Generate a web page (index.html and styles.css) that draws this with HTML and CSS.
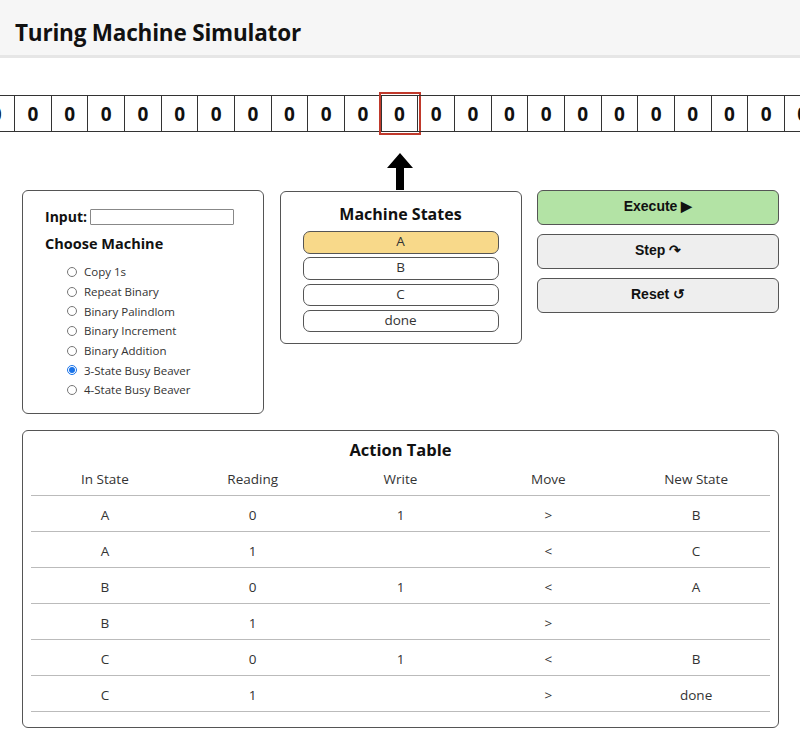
FILE: index.html
```html
<!DOCTYPE html>
<html>
<head>
<meta charset="utf-8">
<title>Turing Machine Simulator</title>
<link rel="stylesheet" href="styles.css">
</head>
<body>
<header class="topbar">
  <h1 class="title">Turing Machine Simulator</h1>
</header>

<div class="tape">
  <div class="cell">0</div><div class="cell">0</div><div class="cell">0</div><div class="cell">0</div>
  <div class="cell">0</div><div class="cell">0</div><div class="cell">0</div><div class="cell">0</div>
  <div class="cell">0</div><div class="cell">0</div><div class="cell">0</div>
  <div class="cell head">0</div>
  <div class="cell">0</div><div class="cell">0</div><div class="cell">0</div><div class="cell">0</div>
  <div class="cell">0</div><div class="cell">0</div><div class="cell">0</div><div class="cell">0</div>
  <div class="cell">0</div><div class="cell">0</div><div class="cell">0</div>
</div>

<div class="pointer">
  <svg width="26" height="37" viewBox="0 0 26 37"><path d="M13 0 L26 15 L17 15 L17 37 L9 37 L9 15 L0 15 Z" fill="#000"/></svg>
</div>

<main class="panels">
  <section class="card config">
    <div class="input-row">
      <label class="input-label" for="tape-input">Input:</label>
      <input id="tape-input" class="tape-input" type="text">
    </div>
    <h2 class="sub">Choose Machine</h2>
    <ul class="machines">
      <li><input type="radio" name="m" class="radio"><span>Copy 1s</span></li>
      <li><input type="radio" name="m" class="radio"><span>Repeat Binary</span></li>
      <li><input type="radio" name="m" class="radio"><span>Binary Palindlom</span></li>
      <li><input type="radio" name="m" class="radio"><span>Binary Increment</span></li>
      <li><input type="radio" name="m" class="radio"><span>Binary Addition</span></li>
      <li><input type="radio" name="m" class="radio" checked><span>3-State Busy Beaver</span></li>
      <li><input type="radio" name="m" class="radio"><span>4-State Busy Beaver</span></li>
    </ul>
  </section>

  <section class="card states">
    <h2 class="states-title">Machine States</h2>
    <div class="state active">A</div>
    <div class="state">B</div>
    <div class="state">C</div>
    <div class="state">done</div>
  </section>

  <section class="controls">
    <button class="btn btn-exec">Execute ▶</button>
    <button class="btn">Step ↷</button>
    <button class="btn">Reset ↺</button>
  </section>
</main>

<section class="card table-card">
  <h2 class="table-title">Action Table</h2>
  <table class="actions">
    <thead>
      <tr><th>In State</th><th>Reading</th><th>Write</th><th>Move</th><th>New State</th></tr>
    </thead>
    <tbody>
      <tr><td>A</td><td>0</td><td>1</td><td>&gt;</td><td>B</td></tr>
      <tr><td>A</td><td>1</td><td></td><td>&lt;</td><td>C</td></tr>
      <tr><td>B</td><td>0</td><td>1</td><td>&lt;</td><td>A</td></tr>
      <tr><td>B</td><td>1</td><td></td><td>&gt;</td><td></td></tr>
      <tr><td>C</td><td>0</td><td>1</td><td>&lt;</td><td>B</td></tr>
      <tr><td>C</td><td>1</td><td></td><td>&gt;</td><td>done</td></tr>
    </tbody>
  </table>
</section>
</body>
</html>
```

FILE: styles.css
```css
* { box-sizing: border-box; }

body {
  margin: 0;
  font-family: "Open Sans", "Noto Sans", sans-serif;
  color: #222;
  background: #fff;
}

.topbar {
  height: 58px;
  background: #f6f6f6;
  border-bottom: 3px solid #e6e6e6;
  display: flex;
  align-items: center;
  padding: 10px 0 0 15px;
}

.title {
  margin: 0;
  font-size: 22.5px;
  font-weight: 700;
  color: #111;
  letter-spacing: -0.2px;
}

.tape {
  margin-top: 33px;
  display: flex;
  justify-content: center;
  overflow: hidden;
  width: 800px;
  padding: 4px 0;
}

.cell {
  flex: 0 0 36.67px;
  height: 37px;
  border-top: 1px solid #333;
  border-bottom: 1px solid #333;
  border-right: 1px solid #333;
  display: flex;
  align-items: center;
  justify-content: center;
  font-size: 19px;
  font-weight: 700;
  color: #111;
}

.cell.head {
  outline: 2px solid #c0392b;
  outline-offset: 1px;
}

.pointer {
  display: flex;
  justify-content: center;
  padding-top: 17px;
  height: 54px;
}

.panels {
  display: grid;
  grid-template-columns: repeat(3, 1fr);
  column-gap: 15.5px;
  align-items: start;
  margin: 0 21px 0 22px;
}

.card {
  border: 1.5px solid #555;
  border-radius: 6px;
  background: #fff;
}

.config {
  height: 224px;
  padding: 16px 22px;
}

.input-row {
  display: flex;
  align-items: center;
  gap: 3px;
}

.input-label {
  font-size: 14px;
  font-weight: 700;
  color: #111;
}

.tape-input {
  width: 144px;
  height: 16px;
  border: 1px solid #888;
  border-radius: 1px;
  padding: 0;
}

.sub {
  margin: 8px 0 9px;
  font-size: 14.5px;
  font-weight: 700;
  color: #111;
}

.machines {
  list-style: none;
  margin: 0;
  padding: 0 0 0 22px;
}

.machines li {
  display: flex;
  align-items: center;
  height: 19.7px;
  font-size: 11.5px;
  color: #333;
}

.radio {
  width: 10px;
  height: 10px;
  margin: 0 7px 0 0;
  accent-color: #1a73e8;
}

.states {
  margin-top: 1px;
  height: 153px;
  padding: 10px 22px 12px;
}

.states-title {
  margin: 0 0 5px;
  text-align: center;
  font-size: 16px;
  font-weight: 700;
  color: #111;
  line-height: 24px;
}

.state {
  height: 22.5px;
  margin-bottom: 3.8px;
  border: 1.5px solid #555;
  border-radius: 7px;
  text-align: center;
  font-size: 13.5px;
  line-height: 19px;
  color: #333;
}

.state.active {
  background: #f8d98a;
}

.controls {
  display: flex;
  flex-direction: column;
  gap: 9px;
}

.btn {
  height: 35px;
  border: 1.5px solid #555;
  border-radius: 6px;
  background: #eeeeee;
  font-family: "Liberation Sans", Arial, sans-serif;
  font-size: 14px;
  font-weight: 700;
  color: #111;
  padding: 0;
  padding-bottom: 4px;
}

.btn-exec {
  background: #b3e3a5;
}

.table-card {
  margin: 16px 21px 0 22px;
  height: 298px;
  padding: 7px 8px 0;
}

.table-title {
  margin: 0;
  text-align: center;
  font-size: 16.5px;
  font-weight: 700;
  color: #111;
  line-height: 24px;
}

.actions {
  width: 100%;
  border-collapse: collapse;
  table-layout: fixed;
}

.actions th,
.actions td {
  text-align: center;
  font-size: 13.5px;
  font-weight: 400;
  color: #333;
  border-bottom: 1px solid #bbb;
  padding: 0;
}

.actions th {
  height: 33px;
  padding-top: 1px;
}

.actions td {
  height: 36px;
  padding-top: 4px;
}
```
